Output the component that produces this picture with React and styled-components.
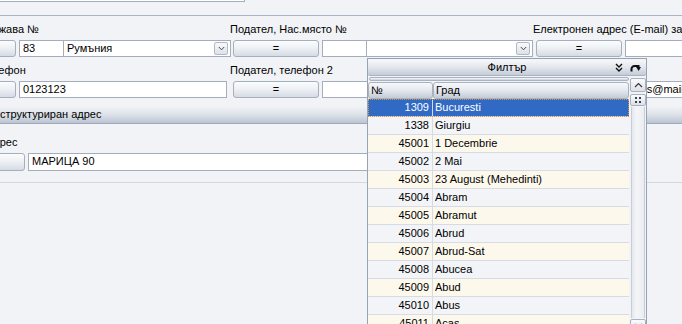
import React from "react";
import styled, { createGlobalStyle, css } from "styled-components";

const Global = createGlobalStyle`
  * { box-sizing: border-box; }
  html, body { margin: 0; padding: 0; background: #f1f3f6; }
  body { font-family: "Liberation Sans", Arial, sans-serif; font-size: 11px; color: #000; }
`;

const Viewport = styled.div`
  position: relative;
  width: 682px;
  height: 324px;
  overflow: hidden;
  background: #f1f3f6;
`;

/* the form is scrolled horizontally: its left part is out of view */
const Canvas = styled.div`
  margin-left: -73px;
  width: 1100px;
`;

const TopBar = styled.div`
  height: 16px;
  border-bottom: 1px solid #abb4c2;
`;

const TopField = styled.div`
  width: 315px;
  height: 2px;
  margin-left: 3px;
  background: #fff;
  border: 1px solid #a3adbc;
  border-top: none;
`;

const FieldsGrid = styled.div`
  display: grid;
  grid-template-columns: repeat(3, 303px);
`;

const Group = styled.div`
  display: flex;
  flex-direction: column;
`;

const Label = styled.div`
  height: ${(p) => p.$h || 24}px;
  padding-top: ${(p) => p.$pt || 7}px;
  padding-left: ${(p) => p.$indent || 0}px;
  line-height: 13px;
  white-space: nowrap;
  overflow: hidden;
`;

const Controls = styled.div`
  display: flex;
  gap: 3px;
  padding-left: ${(p) => p.$indent || 3}px;
  height: ${(p) => p.$h || 17}px;
`;

const Button = styled.div`
  width: ${(p) => p.$w || 86}px;
  flex: none;
  height: 100%;
  border: 1px solid #a6afbd;
  border-radius: 3px;
  background: linear-gradient(#fbfcfd, #eef1f5 45%, #d6dbe4);
  display: flex;
  align-items: center;
  justify-content: center;
  line-height: 1;
  font-size: 11px;
`;

const Input = styled.div`
  width: ${(p) => p.$w}px;
  flex: none;
  height: 100%;
  background: #fff;
  border: 1px solid #a3adbc;
  padding: 0 3px;
  line-height: 15px;
  white-space: nowrap;
  overflow: hidden;
`;

const Combo = styled(Input)`
  border-left: none;
  margin-left: -3px;
  position: relative;
  display: flex;
  align-items: center;
  justify-content: space-between;
  padding-right: 2px;
`;

const ComboArrow = styled.div`
  width: 14px;
  height: 13px;
  border: 1px solid #b1b9c6;
  border-radius: 2px;
  background: linear-gradient(#f8f9fb, #dde2e9);
  display: flex;
  align-items: center;
  justify-content: center;
`;

const SectionHeader = styled.div`
  margin-top: 7px;
  height: 19px;
  padding-left: 59px;
  line-height: 18px;
  background: linear-gradient(#f3f5f8, #dfe4ea 50%, #bcc5d3);
  border-bottom: 1px solid #9ea9ba;
  white-space: nowrap;
`;

const GroupFoot = styled.div`
  margin-top: 11px;
  border-bottom: 1px solid #d2d8e0;
`;

/* ---------- dropdown popup ---------- */

const Popup = styled.div`
  position: absolute;
  left: 367px;
  top: 58px;
  width: 280px;
  height: 276px;
  border: 1px solid #97a3b5;
  background: #f1f3f6;
  display: flex;
  flex-direction: column;
`;

const PopupHeader = styled.div`
  margin-top: 1px;
  height: 16px;
  display: grid;
  grid-template-columns: 1fr auto 1fr;
  align-items: center;
  background: linear-gradient(#f6f7f9, #e2e6ec 50%, #c4ccd8);
  border-bottom: 1px solid #aab3c2;
  border-radius: 2px;
`;

const HeaderTitle = styled.div`
  grid-column: 2;
  line-height: 15px;
`;

const HeaderIcons = styled.div`
  grid-column: 3;
  justify-self: end;
  display: flex;
  align-items: center;
  gap: 7px;
  padding-right: 5px;
`;

const PopupBody = styled.div`
  flex: 1;
  display: flex;
  gap: 1px;
  min-height: 0;
`;

const MainCol = styled.div`
  width: 261px;
  display: flex;
  flex-direction: column;
`;

const barGradient = css`
  background: linear-gradient(#f7f8fa, #e4e8ee 50%, #c3cbd7);
  border: 1px solid #a9b2c1;
  border-radius: 3px;
`;

const FilterBar = styled.div`
  margin: 1px 0 0 1px;
  height: 18px;
  ${barGradient}
`;

const ColHeader = styled.div`
  margin-top: 1px;
  height: 17px;
  display: flex;
`;

const ColCell = styled.div`
  width: ${(p) => (p.$w ? `${p.$w}px` : "auto")};
  flex: ${(p) => (p.$w ? "none" : "1")};
  ${barGradient}
  padding-left: 2px;
  line-height: 15px;
`;

const Row = styled.div`
  height: 18px;
  display: flex;
  line-height: 17px;
  border-bottom: 1px solid #d7dce4;
  background: ${(p) => (p.$sel ? "#316ac5" : p.$alt ? "#fdf8ec" : "#f2f4f7")};
  color: ${(p) => (p.$sel ? "#fff" : "#000")};
  outline: ${(p) => (p.$sel ? "1px dotted #d9963a" : "none")};
  outline-offset: -1px;
  white-space: nowrap;
`;

const NumCell = styled.div`
  width: 65px;
  flex: none;
  text-align: right;
  padding-right: 3px;
  border-right: 1px solid #d7dce4;
`;

const NameCell = styled.div`
  flex: 1;
  padding-left: 2px;
`;

const ScrollCol = styled.div`
  width: 16px;
  display: flex;
  flex-direction: column;
  align-items: stretch;
`;

const ScrollBtn = styled.div`
  margin-top: ${(p) => p.$mt || 0}px;
  height: ${(p) => p.$h || 14}px;
  border: 1px solid #a9b2c1;
  border-radius: 2px;
  background: linear-gradient(#fafbfc, #dce1e8);
  display: flex;
  align-items: center;
  justify-content: center;
  flex: none;
`;

const Track = styled.div`
  flex: 1;
  margin: 1px 1px;
  background: linear-gradient(90deg, #e4e8ee, #f5f6f8 40%, #e9ecf1);
  border-left: 1px solid #c6cdd8;
  border-right: 1px solid #c6cdd8;
`;

const DoubleChevron = () => (
  <svg width="8" height="9" viewBox="0 0 8 9">
    <path d="M1 1 L4 4 L7 1 M1 5 L4 8 L7 5" fill="none" stroke="#111" strokeWidth="1.4" />
  </svg>
);

const RedoIcon = () => (
  <svg width="11" height="8" viewBox="0 0 11 8">
    <path d="M1.5 7.5 V5 A3 3 0 0 1 4.5 2 H7.5" fill="none" stroke="#111" strokeWidth="2" />
    <polygon points="6.2,3 11,3 8.6,7" fill="#111" />
    <rect x="6.5" y="1" width="3" height="2.5" fill="#111" />
  </svg>
);

const ChevronUp = () => (
  <svg width="9" height="6" viewBox="0 0 9 6">
    <path d="M1 5 L4.5 1.5 L8 5" fill="none" stroke="#333" strokeWidth="1.1" />
  </svg>
);

const ChevronDown = () => (
  <svg width="7" height="5" viewBox="0 0 7 5">
    <path d="M0.8 1 L3.5 3.8 L6.2 1" fill="none" stroke="#444" strokeWidth="1" />
  </svg>
);

const Grip = () => (
  <svg width="6" height="6" viewBox="0 0 6 6">
    <rect x="0" y="0" width="2" height="2" fill="#3c4452" />
    <rect x="4" y="0" width="2" height="2" fill="#3c4452" />
    <rect x="0" y="4" width="2" height="2" fill="#3c4452" />
    <rect x="4" y="4" width="2" height="2" fill="#3c4452" />
  </svg>
);

const cities = [
  [1309, "Bucuresti"],
  [1338, "Giurgiu"],
  [45001, "1 Decembrie"],
  [45002, "2 Mai"],
  [45003, "23 August (Mehedinti)"],
  [45004, "Abram"],
  [45005, "Abramut"],
  [45006, "Abrud"],
  [45007, "Abrud-Sat"],
  [45008, "Abucea"],
  [45009, "Abud"],
  [45010, "Abus"],
  [45011, "Acas"],
];

export default function App() {
  return (
    <>
      <Global />
      <Viewport>
        <Canvas>
          <TopBar>
            <TopField />
          </TopBar>
          <FieldsGrid>
            <Group>
              <Label $indent={2}>Подател, Държава №</Label>
              <Controls>
                <Button />
                <Input $w={45}>83</Input>
                <Combo $w={167}>
                  <span>Румъния</span>
                  <ComboArrow>
                    <ChevronDown />
                  </ComboArrow>
                </Combo>
              </Controls>
              <Label $indent={5}>Подател, телефон</Label>
              <Controls>
                <Button />
                <Input $w={208}>0123123</Input>
              </Controls>
            </Group>
            <Group>
              <Label>Подател, Нас.място №</Label>
              <Controls>
                <Button>=</Button>
                <Input $w={45} />
                <Combo $w={166}>
                  <span />
                  <ComboArrow>
                    <ChevronDown />
                  </ComboArrow>
                </Combo>
              </Controls>
              <Label>Подател, телефон 2</Label>
              <Controls>
                <Button>=</Button>
                <Input $w={208} />
              </Controls>
            </Group>
            <Group>
              <Label>Електронен адрес (E-mail) за уведомяване</Label>
              <Controls>
                <Button>=</Button>
                <Input $w={208} />
              </Controls>
              <Label />
              <Controls>
                <Button>=</Button>
                <Input $w={208}>docs@mail.bg</Input>
              </Controls>
            </Group>
          </FieldsGrid>
          <SectionHeader>Неструктуриран адрес</SectionHeader>
          <Label $h={29} $pt={12} $indent={59}>
            Адрес
          </Label>
          <Controls $h={18} $indent={62}>
            <Button $w={36} />
            <Input $w={600}>МАРИЦА 90</Input>
          </Controls>
          <GroupFoot />
        </Canvas>

        <Popup>
          <PopupHeader>
            <HeaderTitle>Филтър</HeaderTitle>
            <HeaderIcons>
              <DoubleChevron />
              <RedoIcon />
            </HeaderIcons>
          </PopupHeader>
          <PopupBody>
            <MainCol>
              <FilterBar />
              <ColHeader>
                <ColCell $w={65}>№</ColCell>
                <ColCell>Град</ColCell>
              </ColHeader>
              {cities.map(([n, name], i) => (
                <Row key={n} $sel={i === 0} $alt={i % 2 === 0}>
                  <NumCell>{n}</NumCell>
                  <NameCell>{name}</NameCell>
                </Row>
              ))}
            </MainCol>
            <ScrollCol>
              <ScrollBtn $mt={2}>
                <ChevronUp />
              </ScrollBtn>
              <ScrollBtn $mt={2} $h={12}>
                <Grip />
              </ScrollBtn>
              <Track />
              <ScrollBtn $h={14}>
                <svg width="9" height="6" viewBox="0 0 9 6">
                  <path d="M1 1 L4.5 4.5 L8 1" fill="none" stroke="#333" strokeWidth="1.1" />
                </svg>
              </ScrollBtn>
            </ScrollCol>
          </PopupBody>
        </Popup>
      </Viewport>
    </>
  );
}
